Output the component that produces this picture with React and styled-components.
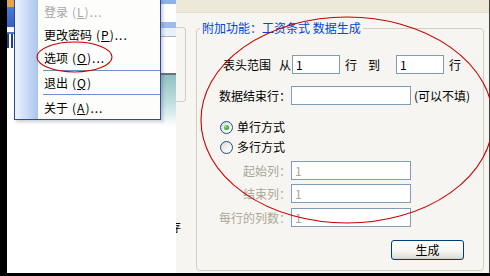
import React from "react";
import styled, { createGlobalStyle } from "styled-components";

const Global = createGlobalStyle`
  html, body { margin: 0; padding: 0; }
  body {
    width: 490px; height: 276px; overflow: hidden; background: #000;
    font-family: "Noto Sans CJK SC", "Noto Sans", sans-serif; font-size: 12px;
  }
  * { box-sizing: border-box; }
`;

const Screen = styled.div`
  position: relative;
  width: 490px;
  height: 276px;
  display: flex;
  flex-direction: column;
  background: #000;
  overflow: hidden;
`;

const MainRow = styled.div`
  display: flex;
  height: 273px;
  flex: none;
`;

const LeftEdge = styled.div`
  width: 7px;
  flex: none;
  background: #000;
`;

const RightEdge = styled.div`
  width: 1px;
  flex: none;
  background: #404040;
`;

/* ---------- window behind the popup menu ---------- */
const BackWindow = styled.div`
  position: relative;
  width: 169px;
  flex: none;
  display: flex;
  background: #fff;
`;

const StripColumn = styled.div`
  width: ${(p) => p.$w}px;
  flex: ${(p) => (p.$w ? "none" : "1")};
  display: flex;
  flex-direction: column;
`;

const Strip = styled.div`
  height: ${(p) => p.$h}px;
  flex: none;
  background: ${(p) => p.$bg};
`;

/* ---------- popup menu ---------- */
const Menu = styled.div`
  position: absolute;
  left: 7px;
  top: -1px;
  width: 147px;
  border: 1px solid #2A4A9C;
  background: linear-gradient(to right, #EEF4FD 0, #A9C5EE 23px, #FDFDFB 23px);
  box-shadow: 2px 2px 3px rgba(60, 60, 90, 0.25);
  display: flex;
  flex-direction: column;
`;

const MenuItem = styled.div`
  height: ${(p) => p.$h}px;
  display: flex;
  align-items: center;
  padding-left: 29px;
  font-size: 12px;
  color: ${(p) => (p.$disabled ? "#A7A6AA" : "#000")};
  white-space: nowrap;
  u { text-underline-offset: 1px; }
`;

const MenuKey = styled.span`
  margin-left: 4px;
  letter-spacing: 1px;
`;

const MenuSep = styled.div`
  height: 1px;
  margin-left: 28px;
  background: #6F8FCB;
`;

/* ---------- dialog ---------- */
const Dialog = styled.div`
  width: 313px;
  flex: none;
  display: flex;
  flex-direction: column;
  background: #F6F5F1;
`;

const TitleBar = styled.div`
  height: 13px;
  flex: none;
  background: #ECE9D8;
  border-bottom: 1px solid #E2DFCC;
`;

const DialogBody = styled.div`
  flex: 1;
  display: flex;
  padding-top: 8px;
`;

const SideCol = styled.div`
  width: 20px;
  flex: none;
  display: flex;
  flex-direction: column;
`;

const SideBox = styled.div`
  margin-top: 6px;
  width: 10px;
  height: 75px;
  border: 1px solid #D0D0BF;
  border-left: none;
  border-radius: 0 4px 4px 0;
`;

const ClipLabel = styled.div`
  margin-top: 118px;
  width: 5px;
  overflow: hidden;
  display: flex;
  justify-content: flex-end;
  line-height: 14px;
  font-size: 12px;
  color: #000;
  white-space: nowrap;
`;

const Group = styled.fieldset`
  margin: 0;
  padding: 0;
  width: 288px;
  height: 250px;
  flex: none;
  min-width: 0;
  border: 1px solid #D0D0BF;
  border-radius: 4px;
`;

const Legend = styled.legend`
  margin-left: 3px;
  padding: 0 2px;
  color: #0046D5;
  font-size: 12px;
  line-height: 14px;
`;

const Content = styled.div`
  display: flex;
  flex-direction: column;
  padding: 20px 0 0 18px;
`;

const Row = styled.div`
  display: flex;
  align-items: center;
  height: ${(p) => p.$h || 19}px;
  margin-top: ${(p) => p.$mt || 0}px;
  padding-left: ${(p) => p.$pl || 0}px;
`;

const LabelCell = styled.div`
  width: 76px;
  flex: none;
  display: flex;
  justify-content: flex-end;
  gap: ${(p) => p.$gap || 0}px;
  line-height: 14px;
  white-space: nowrap;
  color: ${(p) => (p.$disabled ? "#ACA899" : "#000")};
`;

const Text = styled.span`
  margin-left: ${(p) => p.$ml || 0}px;
  line-height: 14px;
  white-space: nowrap;
  color: #000;
`;

const Field = styled.input`
  width: ${(p) => p.$w}px;
  height: 19px;
  margin: 0 0 0 ${(p) => p.$ml || 0}px;
  padding: 0 3px;
  border: 1px solid #7F9DB9;
  background: #fff;
  font-family: inherit;
  font-size: 12px;
  color: ${(p) => (p.$disabled ? "#ACA899" : "#000")};
  outline: none;
`;

const RadioBox = styled.span`
  position: relative;
  width: 13px;
  height: 13px;
  flex: none;
  border-radius: 50%;
  border: 1px solid #1C5180;
  background: linear-gradient(135deg, #DCDCD7 0%, #F4F4F0 60%, #FFFFFF 100%);
  &::after {
    content: "";
    display: ${(p) => (p.$checked ? "block" : "none")};
    position: absolute;
    left: 3px;
    top: 3px;
    width: 5px;
    height: 5px;
    border-radius: 50%;
    background: radial-gradient(circle at 35% 35%, #8CF08A 0%, #2FB22D 55%, #1D8A1B 100%);
  }
`;

const RadioLabel = styled.span`
  margin-left: 4px;
  line-height: 14px;
  color: #000;
`;

const ButtonRow = styled.div`
  display: flex;
  justify-content: flex-end;
  margin-top: ${(p) => p.$mt}px;
  padding-right: 19px;
`;

const XPButton = styled.button`
  width: 73px;
  height: 20px;
  padding: 0;
  border: 1px solid #003C74;
  border-radius: 3px;
  background: linear-gradient(#FFFFFF 0%, #F4F4F0 60%, #E3E0D6 90%, #D6D0C5 100%);
  font-family: inherit;
  font-size: 12px;
  line-height: 14px;
  color: #000;
`;

const Overlay = styled.svg`
  position: absolute;
  left: 0;
  top: 0;
  pointer-events: none;
`;

const DisabledRow = ({ label, mt }) => (
  <Row $mt={mt}>
    <LabelCell $disabled>{label}</LabelCell>
    <Field $w={120} $disabled readOnly defaultValue="1" />
  </Row>
);

export default function App() {
  return (
    <>
      <Global />
      <Screen>
        <MainRow>
          <LeftEdge />
          <BackWindow>
            <StripColumn $w={7}>
              <Strip $h={7} $bg="#E9A24A" />
              <Strip $h={20} $bg="linear-gradient(#4A7BD8, #3461C4)" />
              <Strip $h={5} $bg="#FFFFFF" />
              <Strip $h={2} $bg="#4C74C8" />
              <Strip $h={14} $bg="repeating-linear-gradient(to right, #23407F 0 2px, #FFFFFF 2px 4px)" />
            </StripColumn>
            <StripColumn />
            <StripColumn $w={15}>
              <Strip $h={4} $bg="#8DB2E8" />
              <Strip $h={18} $bg="#FFFFFF" />
              <Strip $h={6} $bg="#9DBCEB" />
              <Strip $h={8} $bg="#E8F0FB" />
              <Strip $h={1} $bg="#B0B0B0" />
              <Strip $h={36} $bg="#FFFFFF" />
              <Strip $h={2} $bg="#707070" />
              <Strip $h={52} $bg="linear-gradient(#8FC0C2, #C9E2E2 60%, #FFFFFF)" />
            </StripColumn>
            <Menu>
              <MenuItem $h={23} $disabled>登录<MenuKey>(<u>L</u>)...</MenuKey></MenuItem>
              <MenuItem $h={22}>更改密码<MenuKey>(<u>P</u>)...</MenuKey></MenuItem>
              <MenuItem $h={25}>选项<MenuKey>(<u>O</u>)...</MenuKey></MenuItem>
              <MenuSep />
              <MenuItem $h={23}>退出<MenuKey>(<u>Q</u>)</MenuKey></MenuItem>
              <MenuSep />
              <MenuItem $h={24}>关于<MenuKey>(<u>A</u>)...</MenuKey></MenuItem>
            </Menu>
          </BackWindow>
          <Dialog>
            <TitleBar />
            <DialogBody>
              <SideCol>
                <SideBox />
                <ClipLabel>存</ClipLabel>
              </SideCol>
              <Group>
                <Legend>附加功能：工资条式 数据生成</Legend>
                <Content>
                  <Row>
                    <LabelCell $gap={8}>
                      <span>表头范围</span>
                      <span>从</span>
                    </LabelCell>
                    <Field $w={48} $ml={1} readOnly defaultValue="1" />
                    <Text $ml={5}>行</Text>
                    <Text $ml={11}>到</Text>
                    <Field $w={48} $ml={16} readOnly defaultValue="1" />
                    <Text $ml={5}>行</Text>
                  </Row>
                  <Row $mt={12}>
                    <LabelCell>数据结束行：</LabelCell>
                    <Field $w={120} readOnly defaultValue="" />
                    <Text $ml={3}>(可以不填)</Text>
                  </Row>
                  <Row $mt={14} $h={16} $pl={5}>
                    <RadioBox $checked />
                    <RadioLabel>单行方式</RadioLabel>
                  </Row>
                  <Row $mt={4} $h={16} $pl={5}>
                    <RadioBox />
                    <RadioLabel>多行方式</RadioLabel>
                  </Row>
                  <DisabledRow label="起始列：" mt={6} />
                  <DisabledRow label="结束列：" mt={4} />
                  <DisabledRow label="每行的列数：" mt={5} />
                  <ButtonRow $mt={13}>
                    <XPButton>生成</XPButton>
                  </ButtonRow>
                </Content>
              </Group>
            </DialogBody>
          </Dialog>
          <RightEdge />
        </MainRow>
        <Overlay width="490" height="276" viewBox="0 0 490 276">
          <ellipse cx="347" cy="120" rx="146" ry="103" fill="none" stroke="#C80000" strokeWidth="1.1" />
          <ellipse cx="74.5" cy="57" rx="37.5" ry="15" fill="none" stroke="#C80000" strokeWidth="1.1" />
        </Overlay>
      </Screen>
    </>
  );
}
